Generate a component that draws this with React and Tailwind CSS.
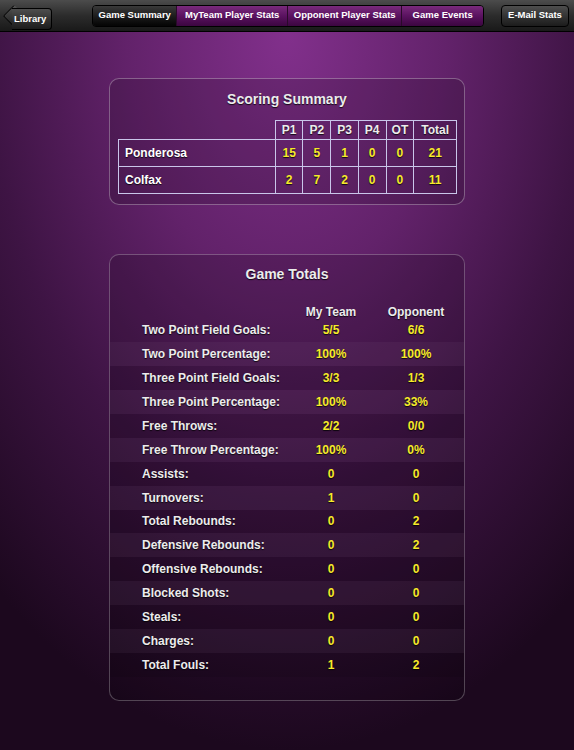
import React from 'react'

const PERIODS = ['P1', 'P2', 'P3', 'P4', 'OT', 'Total']

const SCORES = [
  { team: 'Ponderosa', values: [15, 5, 1, 0, 0, 21] },
  { team: 'Colfax', values: [2, 7, 2, 0, 0, 11] },
]

const TOTALS = [
  ['Two Point Field Goals:', '5/5', '6/6'],
  ['Two Point Percentage:', '100%', '100%'],
  ['Three Point Field Goals:', '3/3', '1/3'],
  ['Three Point Percentage:', '100%', '33%'],
  ['Free Throws:', '2/2', '0/0'],
  ['Free Throw Percentage:', '100%', '0%'],
  ['Assists:', '0', '0'],
  ['Turnovers:', '1', '0'],
  ['Total Rebounds:', '0', '2'],
  ['Defensive Rebounds:', '0', '2'],
  ['Offensive Rebounds:', '0', '0'],
  ['Blocked Shots:', '0', '0'],
  ['Steals:', '0', '0'],
  ['Charges:', '0', '0'],
  ['Total Fouls:', '1', '2'],
]

const TABS = [
  { label: 'Game Summary', w: 'w-[83px]', active: true },
  { label: 'MyTeam Player Stats', w: 'w-[111px]' },
  { label: 'Opponent Player Stats', w: 'w-[114px]' },
  { label: 'Game Events', w: 'w-[82px]' },
]

const shadow = '[text-shadow:0_1px_1px_rgba(0,0,0,0.8)]'

function TopBar() {
  return (
    <div className="h-[32px] flex items-center px-[5px] bg-gradient-to-b from-[#4c4c4c] via-[#2c2c2c] to-[#191919] border-b border-black">
      <div className="relative ml-[7px] h-[22px]">
        <div className="absolute left-[-6px] top-[3px] w-[16px] h-[16px] rotate-45 rounded-[2px] bg-gradient-to-br from-[#555] to-[#1e1e1e] border-l border-b border-black"></div>
        <button className="relative h-[22px] pl-[2px] pr-[5px] rounded-r-[4px] bg-gradient-to-b from-[#4e4e4e] to-[#1c1c1c] border border-l-0 border-black text-white text-[9.5px] font-bold">
          Library
        </button>
      </div>
      <div className="ml-[40px] flex h-[22px] rounded-[4px] overflow-hidden border border-black">
        {TABS.map((t, i) => (
          <div key={t.label}
            className={`${t.w} flex items-center justify-center text-white text-[9.5px] font-bold ${i > 0 ? 'border-l border-[#2a0a2a]' : ''} ${t.active ? 'bg-gradient-to-b from-[#3a3a3a] to-[#050505]' : 'bg-gradient-to-b from-[#7a2a7c] via-[#5a1260] to-[#3c0640]'}`}>
            {t.label}
          </div>
        ))}
      </div>
      <button className="ml-auto h-[22px] w-[68px] rounded-[4px] bg-gradient-to-b from-[#4e4e4e] to-[#1c1c1c] border border-black text-white text-[9.5px] font-bold">
        E-Mail Stats
      </button>
    </div>
  )
}

function ScoringSummary() {
  return (
    <div className="w-[356px] rounded-[10px] border border-white/30 bg-black/15 pt-[10px] pb-[10px] px-[8px]">
      <h2 className={`text-center text-[14px] font-bold text-[#ececec] ${shadow}`}>Scoring Summary</h2>
      <table className="mt-[10px] w-[339px] border-collapse text-[12px] font-bold">
        <thead>
          <tr className="h-[18px]">
            <th className="w-[159px]"></th>
            {PERIODS.map((p) => (
              <th key={p} className={`border-[1.5px] border-[#c9c6ea] text-[#ececec] font-bold ${shadow} ${p === 'Total' ? 'w-[43px]' : 'w-[28px]'}`}>{p}</th>
            ))}
          </tr>
        </thead>
        <tbody>
          {SCORES.map((s) => (
            <tr key={s.team} className="h-[27px]">
              <td className={`border-[1.5px] border-[#c9c6ea] pl-[6px] text-white ${shadow}`}>{s.team}</td>
              {s.values.map((v, i) => (
                <td key={i} className={`border-[1.5px] border-[#c9c6ea] text-center text-[#f6ea2a] ${shadow}`}>{v}</td>
              ))}
            </tr>
          ))}
        </tbody>
      </table>
    </div>
  )
}

function GameTotals() {
  return (
    <div className="w-[356px] rounded-[10px] border border-white/25 bg-black/15 pt-[9px] pb-[23px]">
      <h2 className={`text-center text-[14px] font-bold text-[#ececec] ${shadow}`}>Game Totals</h2>
      <div className={`mt-[18px] flex text-[12px] font-bold text-[#ececec] ${shadow}`}>
        <div className="w-[180px]"></div>
        <div className="w-[82px] text-center">My Team</div>
        <div className="w-[88px] text-center">Opponent</div>
      </div>
      <div className="-mt-[3px]">
        {TOTALS.map(([label, mine, opp], i) => (
          <div key={label}
            className={`h-[23.95px] flex items-center text-[12px] font-bold ${shadow} ${i === 0 ? '' : i % 2 === 1 ? 'bg-white/[0.035]' : 'bg-black/[0.08]'}`}>
            <div className="w-[180px] pl-[32px] text-[#ececec]">{label}</div>
            <div className="w-[82px] text-center text-[#f6ea2a]">{mine}</div>
            <div className="w-[88px] text-center text-[#f6ea2a]">{opp}</div>
          </div>
        ))}
      </div>
    </div>
  )
}

export default function App() {
  return (
    <div className="w-[574px] h-[750px] overflow-hidden flex flex-col font-['Liberation_Sans',Arial,sans-serif] bg-[#150816]">
      <TopBar />
      <div className="flex-1 flex flex-col items-center pt-[46px] gap-[49px] bg-[radial-gradient(ellipse_80%_100%_at_50%_0%,#82308c_0%,#62226a_35%,#3e1444_65%,#1c081e_100%)]">
        <ScoringSummary />
        <GameTotals />
      </div>
    </div>
  )
}
